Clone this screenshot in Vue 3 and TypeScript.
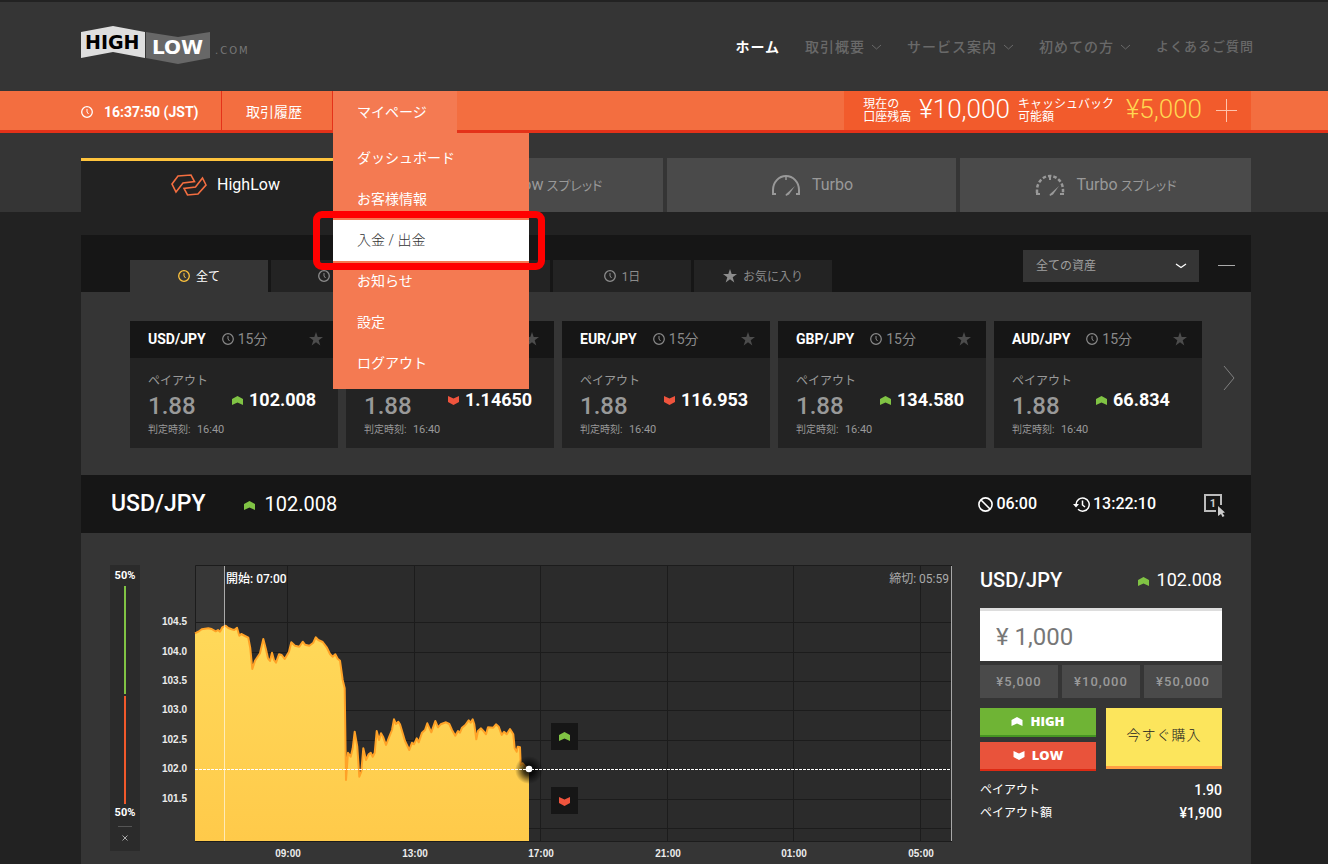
<script setup lang="ts">
import { computed, ref } from 'vue'

type Trend = 'up' | 'down'
interface Asset { pair: string; rate: string; trend: Trend }

const navLinks = [
  { label: 'ホーム', active: true, more: false },
  { label: '取引概要', active: false, more: true },
  { label: 'サービス案内', active: false, more: true },
  { label: '初めての方', active: false, more: true },
]

const menuItems = ['ダッシュボード', 'お客様情報', '入金 / 出金', 'お知らせ', '設定', 'ログアウト']
const currentItem = '入金 / 出金'

const products = [
  { name: 'HighLow', suffix: '', icon: 'wave', id: 'hl' },
  { name: 'HighLow', suffix: 'スプレッド', icon: 'wave', id: 'hls' },
  { name: 'Turbo', suffix: '', icon: 'gauge', id: 'tb' },
  { name: 'Turbo', suffix: 'スプレッド', icon: 'gauge-dashed', id: 'tbs' },
]
const activeProduct = ref('hl')

const periods = [
  { label: '全て', star: false },
  { label: '15分', star: false },
  { label: '1時間', star: false },
  { label: '1日', star: false },
  { label: 'お気に入り', star: true },
]
const activePeriod = ref('全て')

const assets: Asset[] = [
  { pair: 'USD/JPY', rate: '102.008', trend: 'up' },
  { pair: 'EUR/USD', rate: '1.14650', trend: 'down' },
  { pair: 'EUR/JPY', rate: '116.953', trend: 'down' },
  { pair: 'GBP/JPY', rate: '134.580', trend: 'up' },
  { pair: 'AUD/JPY', rate: '66.834', trend: 'up' },
]

const amount = ref('¥ 1,000')
const presets = ['¥5,000', '¥10,000', '¥50,000']

const trendPath: Record<Trend, string> = {
  up: 'M0 3L5.500 0L11 3V9L5.500 6.500L0 9Z',
  down: 'M0 0L5.500 2.500L11 0V6L5.500 9L0 6Z',
}
const starPath = 'M7 0L8.700 5H14L9.700 8.200L11.300 13.500L7 10.300L2.700 13.500L4.300 8.200L0 5H5.300Z'

const rateTicks = [
  { y: 622, label: '104.5' },
  { y: 652, label: '104.0' },
  { y: 681, label: '103.5' },
  { y: 710, label: '103.0' },
  { y: 740, label: '102.5' },
  { y: 769, label: '102.0' },
  { y: 799, label: '101.5' },
  { y: 828, label: '' },
]
const timeTicks = [
  { x: 287, label: '09:00' },
  { x: 414, label: '13:00' },
  { x: 540, label: '17:00' },
  { x: 667, label: '21:00' },
  { x: 793, label: '01:00' },
  { x: 920, label: '05:00' },
]

const series: [number, number][] = [
  [195, 633.3], [198.3, 631.7], [201.7, 629.3], [208.3, 628.3], [211.7, 629], [215.7, 631.3], [218, 630],
  [220, 631.7], [222.3, 627.3], [225.7, 625.7], [228.3, 628], [231.7, 629.3], [234.3, 630], [237, 627.7],
  [239.3, 635.7], [241.3, 634], [245, 636], [248.3, 637.7], [250.3, 648.3], [252.3, 669], [255, 660.7],
  [260, 653.3], [263.3, 639], [265.7, 648.3], [268, 658.3], [270, 661], [272, 652.7], [274, 660],
  [276, 662.7], [279, 654.3], [281.7, 655], [284.7, 659], [289, 651.7], [291.3, 642.3], [295, 645.7],
  [299.3, 646.7], [302.7, 641.7], [305, 644.7], [309.3, 645.7], [313.3, 642.7], [315.7, 637.3],
  [318.3, 640], [322.7, 642], [326.7, 647.3], [330, 654], [332.7, 656.7], [335.3, 654.3], [337.7, 658.7],
  [340, 660.7], [341.3, 670], [342.7, 680], [344.7, 688.3], [346, 780], [348, 752.7], [350.7, 756.7],
  [352.7, 748.3], [354.7, 731.7], [357.3, 746.7], [359.3, 776.7], [361.3, 771.7], [363.3, 748.3],
  [366, 760], [368.7, 754.3], [370.7, 752.7], [372.7, 756.7], [374.7, 752.7], [376.7, 731], [379, 740],
  [381, 733.3], [383.3, 737.3], [386, 745], [389.3, 736.7], [392, 730], [394, 719.3], [396, 724],
  [398.3, 721.7], [400, 724.3], [402.7, 733.3], [405, 741], [409.3, 750], [412, 742.7], [414, 744.3],
  [416.7, 738.3], [418.7, 742.3], [422, 732.7], [425, 730], [427.3, 723.3], [431.3, 732.3], [435.3, 721],
  [438, 727.3], [440.7, 724.3], [446, 722.3], [449.3, 724], [452, 730], [455.3, 735.7], [458, 731],
  [460, 732.7], [462, 727.7], [465.3, 725], [468.7, 720.3], [470.7, 722.7], [472.7, 719.3], [474.3, 724.3],
  [476.3, 739.3], [478, 731], [481, 728.3], [484, 731.7], [486, 734.3], [488, 727.3], [493.3, 727.7],
  [496, 724.3], [498.7, 726.7], [501.7, 735], [504, 731.7], [506.7, 734.3], [510, 729], [513.3, 734.3],
  [514.7, 748.3], [516.7, 751.7], [517.7, 746.7], [520, 747.3], [520.7, 765], [522.7, 763.3],
  [525.3, 766.7], [529, 769],
]
const linePoints = computed(() => series.map((p) => p.join(',')).join(' '))
const areaPoints = computed(() => `195,841 ${linePoints.value} 529,841`)
</script>

<template>
  <div class="page">
    <header class="site-header">
      <a href="#" class="logo" aria-label="HighLow.com">
        <svg width="172" height="40" viewBox="0 0 172 40">
          <path d="M0 6L32 0L64 6V32L32 26L0 32Z" fill="#dedede" />
          <path d="M65 6L97 11L129 6V32L97 38L65 32Z" fill="#676767" />
          <text x="4" y="23" font-size="19" font-weight="700" fill="#000">HIGH</text>
          <text x="71" y="28" font-size="20" font-weight="700" fill="#fff">LOW</text>
          <text x="134" y="28" font-size="10" letter-spacing="2" fill="#777">.COM</text>
        </svg>
      </a>
      <nav class="main-nav">
        <a v-for="link in navLinks" :key="link.label" href="#" :class="{ active: link.active }">
          {{ link.label }}
          <svg v-if="link.more" width="11" height="6" viewBox="0 0 11 6">
            <path d="M1 1L5.500 5L10 1" fill="none" stroke="currentColor" />
          </svg>
        </a>
        <a href="#" class="small">よくあるご質問</a>
      </nav>
    </header>

    <div class="account-bar">
      <div class="clock">
        <svg width="12" height="12" viewBox="0 0 12 12" fill="none" stroke="#fff">
          <circle cx="6" cy="6" r="5.300" stroke-width="1.300" />
          <path d="M6 3V6L7.500 8" />
        </svg>
        <span>16:37:50 (JST)</span>
      </div>
      <a href="#" class="bar-link">取引履歴</a>
      <div class="my-page">
        <button type="button" class="bar-link open" aria-expanded="true">マイページ</button>
        <ul class="menu">
          <li v-for="item in menuItems" :key="item">
            <a href="#" :class="{ current: item === currentItem }">{{ item }}</a>
          </li>
        </ul>
      </div>
      <div class="balance">
        <span class="caption">現在の<br />口座残高</span>
        <span class="money">¥10,000</span>
        <span class="caption">キャッシュバック<br />可能額</span>
        <span class="money cashback">¥5,000</span>
        <button type="button" class="icon-button" aria-label="残高を展開">
          <svg width="21" height="23" viewBox="0 0 21 23">
            <path d="M0 11.500H21M10.500 0V23" stroke="#ffc4ad" fill="none" />
          </svg>
        </button>
      </div>
    </div>

    <div class="product-strip">
      <button
        v-for="p in products"
        :key="p.id"
        type="button"
        class="product"
        :class="{ active: p.id === activeProduct }"
        @click="activeProduct = p.id"
      >
        <svg v-if="p.icon === 'wave'" class="wave" width="36" height="22" viewBox="0 0 36 22" fill="none" stroke-width="1.600">
          <path d="M1 10L7 2L20 1L23.500 7.500L12 9L5 18Z" />
          <path d="M35 11L31.500 4L24.500 13L13 14.500L16.500 21L27 20Z" />
        </svg>
        <svg v-else width="32" height="22" viewBox="0 0 32 22" fill="none" stroke="#999">
          <template v-if="p.icon === 'gauge'">
            <path d="M6 20H3V16A13 14 0 0 1 29 16V20H26" stroke-width="2" />
            <path d="M16 2V6" stroke-width="1.500" />
          </template>
          <template v-else>
            <path d="M3 19V16A13 14 0 0 1 29 16V19" stroke-width="2.500" stroke-dasharray="3.500 2" />
            <path d="M2 20H6M26 20H30" stroke-width="2" />
            <path d="M16 3V6" stroke-width="2" />
          </template>
          <path d="M25 12L19 20.500L16 22L15.500 20.500Z" fill="#999" stroke="none" />
        </svg>
        <span>{{ p.name }}<small v-if="p.suffix">{{ ' ' + p.suffix }}</small></span>
      </button>
    </div>

    <main class="content">
      <section class="market">
        <div class="market-head">
          <div class="periods">
            <button
              v-for="p in periods"
              :key="p.label"
              type="button"
              :class="{ active: p.label === activePeriod }"
              @click="activePeriod = p.label"
            >
              <svg v-if="p.star" width="14" height="14" viewBox="0 0 14 14"><path :d="starPath" fill="#8c8c8c" /></svg>
              <svg v-else class="tick" width="12" height="12" viewBox="0 0 12 12" fill="none" stroke="currentColor">
                <circle cx="6" cy="6" r="5.300" stroke-width="1.300" />
                <path d="M6 3V6L7.500 8" />
              </svg>
              <span>{{ p.label }}</span>
            </button>
          </div>
          <div class="select-wrap">
            <select aria-label="資産">
              <option>全ての資産</option>
            </select>
            <svg width="12" height="6" viewBox="0 0 12 6">
              <path d="M1 1L6 4.500L11 1" fill="none" stroke="#fff" stroke-width="1.300" />
            </svg>
          </div>
          <button type="button" class="icon-button fold" aria-label="折りたたむ">
            <svg width="17" height="3" viewBox="0 0 17 3"><path d="M0 1.500H17" stroke="#aaa" /></svg>
          </button>
        </div>

        <div class="market-body">
          <div class="cards">
            <article v-for="a in assets" :key="a.pair" class="card">
              <div class="card-head">
                <strong>{{ a.pair }}</strong>
                <svg width="12" height="12" viewBox="0 0 12 12" fill="none" stroke="#8a8a8a">
                  <circle cx="6" cy="6" r="5.300" stroke-width="1.200" />
                  <path d="M6 3V6L7.500 8" />
                </svg>
                <span>15分</span>
                <button type="button" class="icon-button star" aria-label="お気に入り">
                  <svg width="14" height="14" viewBox="0 0 14 14"><path :d="starPath" fill="#4c4c4c" /></svg>
                </button>
              </div>
              <div class="card-body">
                <div class="payout">
                  <span class="label">ペイアウト</span>
                  <span class="ratio">1.88</span>
                  <span class="judge">判定時刻: <time>16:40</time></span>
                </div>
                <div class="rate">
                  <svg :class="a.trend" width="11" height="9" viewBox="0 0 11 9"><path :d="trendPath[a.trend]" /></svg>
                  <span>{{ a.rate }}</span>
                </div>
              </div>
            </article>
          </div>
          <button type="button" class="icon-button next" aria-label="次へ">
            <svg width="12" height="26" viewBox="0 0 12 26">
              <path d="M1 1L11 13L1 25" fill="none" stroke="#808080" />
            </svg>
          </button>
        </div>
      </section>

      <section class="trade">
        <div class="trade-head">
          <h2>USD/JPY</h2>
          <svg class="up head-arrow" width="11" height="9" viewBox="0 0 11 9"><path :d="trendPath.up" /></svg>
          <span class="quote">102.008</span>
          <div class="timer">
            <svg width="15" height="15" viewBox="0 0 15 15" fill="none" stroke="#fff" stroke-width="1.600">
              <circle cx="7.500" cy="7.500" r="6.600" />
              <path d="M3 3L12 12" />
            </svg>
            <span>06:00</span>
          </div>
          <div class="timer">
            <svg width="17" height="15" viewBox="0 0 17 15" fill="none" stroke="#fff" stroke-width="1.500">
              <path d="M3 7.500A6.600 6.600 0 1 1 5 12.300" />
              <path d="M9.500 3.500V8L12 10" />
              <path d="M0 7H6L3 10.500Z" fill="#fff" stroke="none" />
            </svg>
            <span>13:22:10</span>
          </div>
          <button type="button" class="icon-button one-click" aria-label="ワンクリック注文">
            <svg width="22" height="24" viewBox="0 0 22 24">
              <path d="M12 17H1V1H17V11" fill="none" stroke="#bbb" stroke-width="2" />
              <text x="9" y="13" text-anchor="middle" font-size="11" font-weight="700" fill="#ccc">1</text>
              <path d="M14 12L21 18.500L18.500 19L20.500 22L18.500 23L17 20L14 22Z" fill="#ccc" />
            </svg>
          </button>
        </div>

        <div class="trade-body">
          <div class="sentiment">
            <span>50%</span>
            <i class="bar high"></i>
            <i class="bar low"></i>
            <span>50%</span>
            <hr />
            <button type="button" class="icon-button" aria-label="閉じる">
              <svg width="6" height="6" viewBox="0 0 6 6"><path d="M0.500 0.500L5.500 5.500M5.500 0.500L0.500 5.500" stroke="#aaa" /></svg>
            </button>
          </div>

          <svg class="chart" viewBox="159 565 793 299" role="img" aria-label="USD/JPY">
            <defs>
              <linearGradient id="fill" x1="0" y1="0" x2="0" y2="1">
                <stop offset="0" stop-color="#ffd95a" />
                <stop offset="1" stop-color="#ffca4a" />
              </linearGradient>
              <radialGradient id="halo">
                <stop offset="0" stop-color="#000" stop-opacity="0.950" />
                <stop offset="0.400" stop-color="#000" stop-opacity="0.700" />
                <stop offset="1" stop-color="#000" stop-opacity="0" />
              </radialGradient>
            </defs>
            <rect x="195" y="565" width="757" height="276" fill="#2b2b2b" />
            <rect x="195" y="565" width="29" height="276" fill="#373737" />
            <g stroke="#1c1c1c">
              <path v-for="t in rateTicks" :key="t.y" :d="`M195 ${t.y + 0.5}H952`" />
              <path v-for="t in timeTicks" :key="t.x" :d="`M${t.x + 0.5} 565V841`" />
              <path d="M952 565.500H195.500V841.500H952" fill="none" />
            </g>
            <polygon :points="areaPoints" fill="url(#fill)" />
            <polyline :points="linePoints" fill="none" stroke="#ffa227" stroke-width="2" stroke-linejoin="round" />
            <path d="M224.500 566V841" stroke="#fff" stroke-opacity="0.600" />
            <path d="M951.500 566V841" stroke="#a8a8a8" />
            <circle cx="529" cy="770" r="14" fill="url(#halo)" />
            <path d="M195 769.500H951" stroke="#fff" stroke-dasharray="3 1" />
            <circle cx="529" cy="769" r="3.300" fill="#fff" />
            <g class="axis">
              <text v-for="t in rateTicks" :key="t.y" x="187" :y="t.y + 3" text-anchor="end">{{ t.label }}</text>
              <text v-for="t in timeTicks" :key="t.x" :x="t.x + 1" y="857" text-anchor="middle">{{ t.label }}</text>
            </g>
            <text class="mark" x="226" y="583" font-weight="500" fill="#fff">開始: 07:00</text>
            <text class="mark" x="949" y="583" text-anchor="end" fill="#aaa">締切: 05:59</text>
            <rect x="551" y="723" width="27" height="27" fill="#161616" />
            <rect x="551" y="787" width="27" height="27" fill="#161616" />
            <path class="up" transform="translate(559 732)" :d="trendPath.up" />
            <path class="down" transform="translate(559 797)" :d="trendPath.down" />
          </svg>

          <form class="order" @submit.prevent>
            <div class="order-title">
              <strong>USD/JPY</strong>
              <svg class="up" width="11" height="9" viewBox="0 0 11 9"><path :d="trendPath.up" /></svg>
              <span>102.008</span>
            </div>
            <input v-model="amount" class="amount" type="text" aria-label="金額" />
            <div class="presets">
              <button v-for="p in presets" :key="p" type="button" @click="amount = p.replace('¥', '¥ ')">{{ p }}</button>
            </div>
            <div class="actions">
              <div class="directions">
                <button type="button" class="high">
                  <svg width="12" height="9" viewBox="0 0 11 9"><path :d="trendPath.up" fill="#fff" /></svg>HIGH
                </button>
                <button type="button" class="low">
                  <svg width="12" height="9" viewBox="0 0 11 9"><path :d="trendPath.down" fill="#fff" /></svg>LOW
                </button>
              </div>
              <button type="submit" class="buy">今すぐ購入</button>
            </div>
            <dl class="summary">
              <div><dt>ペイアウト</dt><dd>1.90</dd></div>
              <div><dt>ペイアウト額</dt><dd>¥1,900</dd></div>
            </dl>
          </form>
        </div>
      </section>
    </main>
  </div>
</template>

<style>
body {
  background: #222;
}
</style>

<style scoped>
.page {
  min-width: 1200px;
  border-top: 2px solid #222;
  background: #222;
  color: #fff;
  font: 14px/20px Roboto, "Noto Sans CJK JP", sans-serif;
}
.page *,
.page *::after {
  box-sizing: border-box;
}
button,
select,
input {
  font: inherit;
  color: inherit;
  border: 0;
  border-radius: 0;
  padding: 0;
  margin: 0;
  background: none;
}
button {
  cursor: pointer;
}
a {
  color: inherit;
  text-decoration: none;
}
svg {
  display: block;
  flex: none;
}
.icon-button {
  display: flex;
  align-items: center;
  justify-content: center;
}
.up {
  fill: #80c344;
}
.down {
  fill: #ef543d;
}

.site-header {
  display: flex;
  align-items: center;
  justify-content: space-between;
  height: 89px;
  padding: 0 74px 0 81px;
  background: #353535;
}
.logo {
  padding-bottom: 2px;
}
.logo text {
  font-family: "DejaVu Sans", sans-serif;
}
.main-nav {
  display: flex;
  align-items: center;
  gap: 25px;
  color: #696969;
  font-weight: 500;
  letter-spacing: 1px;
}
.main-nav a {
  display: flex;
  align-items: center;
  gap: 6px;
}
.main-nav .active {
  color: #fff;
  font-weight: 700;
}
.main-nav .small {
  font-size: 13px;
}

.account-bar {
  position: relative;
  z-index: 2;
  display: flex;
  height: 42px;
  padding: 0 77px 0 81px;
  border-bottom: 3px solid #e43219;
  background: #f36e40;
}
.clock {
  display: flex;
  align-items: center;
  gap: 11px;
  width: 141px;
  padding-top: 3px;
  border-right: 1px solid #e43219;
  font-weight: 700;
}
.bar-link {
  display: flex;
  align-items: center;
  padding: 3px 30px 0 24px;
  border-right: 1px solid #e43219;
}
.my-page {
  position: relative;
  height: 42px;
}
.bar-link.open {
  height: 42px;
  padding: 0 30px 0 24px;
  border: 0;
  background: #f47a52;
}
.menu {
  position: absolute;
  top: 42px;
  left: 0;
  width: 196px;
  margin: 0;
  padding: 5px 0;
  list-style: none;
  background: #f47a52;
}
.menu a {
  position: relative;
  display: block;
  padding: 0 24px;
  line-height: 41px;
}
.menu .current {
  background: #fff;
  color: #333;
  font-weight: 300;
}
.menu .current::after {
  content: "";
  position: absolute;
  inset: -9px -16px -9px -20px;
  border: 7px solid #f00;
  border-radius: 9px;
}
.balance {
  display: flex;
  align-items: center;
  gap: 8px;
  margin-left: auto;
  padding: 0 14px 0 19px;
  background: #f25b2c;
}
.caption {
  font-size: 12px;
  line-height: 13px;
}
.money {
  padding-bottom: 3px;
  font-size: 26px;
  font-weight: 300;
}
.cashback {
  margin: 0 6px 0 4px;
  color: #ffd651;
}

.product-strip {
  display: grid;
  grid-template-columns: 1fr 1fr 1fr 291px;
  gap: 4px;
  padding: 25px 77px 0 81px;
  background: #353535;
}
.product {
  display: flex;
  align-items: center;
  justify-content: center;
  gap: 10px;
  height: 54px;
  background: #4a4a4a;
  color: #999;
  font-size: 16px;
}
.product small {
  font-size: 13px;
  font-feature-settings: "palt";
}
.product.active {
  padding-bottom: 3px;
  border-top: 3px solid #ffc43d;
  background: #222;
  color: #fff;
}
.wave {
  stroke: #999;
}
.active .wave {
  stroke: #f36e40;
}

.content {
  padding: 23px 77px 0 81px;
}
.market-head {
  display: flex;
  align-items: center;
  height: 57px;
  padding: 4px 16px 0 49px;
  background: #161616;
}
.periods {
  display: flex;
  align-self: flex-end;
  gap: 3px;
  margin-right: auto;
}
.periods button {
  display: flex;
  align-items: center;
  justify-content: center;
  gap: 6px;
  width: 138px;
  height: 32px;
  background: #232323;
  color: #8c8c8c;
  font-size: 12px;
}
.periods span {
  padding-top: 2px;
}
.periods .active {
  background: #353535;
  color: #fff;
}
.periods .active .tick {
  color: #ffc43d;
}
.select-wrap {
  position: relative;
  margin-right: 19px;
}
.select-wrap select {
  display: block;
  width: 176px;
  height: 32px;
  padding: 0 13px;
  appearance: none;
  background: #353535;
  color: #a0a0a0;
  font-size: 12px;
}
.select-wrap svg {
  position: absolute;
  top: 13px;
  right: 12px;
}
.market-body {
  display: flex;
  padding: 29px 0 27px 49px;
  background: #353535;
}
.cards {
  display: flex;
  flex: 1;
  gap: 8px;
}
.card {
  flex: 1;
  background: #232323;
}
.card-head {
  display: flex;
  align-items: center;
  height: 37px;
  padding: 0 15px 2px 18px;
  background: #161616;
  color: #8a8a8a;
}
.card-head strong {
  margin-right: 16px;
  color: #fff;
}
.card-head span {
  margin-left: 4px;
}
.star {
  margin-left: auto;
}
.card-body {
  display: flex;
  height: 90px;
  padding: 13px 18px 0;
}
.payout {
  display: flex;
  flex-direction: column;
  width: 84px;
  color: #999;
}
.label {
  font-size: 12px;
}
.ratio {
  font-size: 24px;
  line-height: 30px;
  font-weight: 500;
}
.judge {
  font-size: 10px;
  line-height: 18px;
  white-space: nowrap;
}
.judge time {
  margin-left: 4px;
  font-size: 11px;
}
.rate {
  display: flex;
  align-items: center;
  align-self: flex-start;
  gap: 6px;
  padding-top: 19px;
  font-size: 18px;
  font-weight: 700;
}
.next {
  width: 49px;
  padding: 0 0 14px 5px;
}

.trade-head {
  display: flex;
  align-items: center;
  height: 58px;
  padding: 0 25px 0 30px;
  background: #161616;
}
.trade-head h2 {
  margin: 0 39px 0 0;
  font-size: 23px;
  font-weight: 500;
}
.head-arrow {
  margin-top: 3px;
}
.quote {
  margin: 0 auto 0 9px;
  font-size: 20px;
}
.timer {
  display: flex;
  align-items: center;
  gap: 3px;
  margin-right: 36px;
  font-size: 16px;
  font-weight: 500;
}
.one-click {
  margin-left: 12px;
  padding-top: 3px;
}
.trade-body {
  display: flex;
  align-items: flex-start;
  padding: 32px 29px 0;
  background: #353535;
}
.sentiment {
  display: flex;
  flex-direction: column;
  align-items: center;
  width: 30px;
  padding: 3px 0 5px;
  background: #2b2b2b;
  font-size: 11px;
  line-height: 16px;
  font-weight: 700;
}
.bar {
  width: 2px;
  height: 108px;
}
.bar.high {
  margin: 2px 0;
  background: #80c344;
}
.bar.low {
  margin-bottom: 1px;
  background: #f1592b;
}
.sentiment hr {
  width: 14px;
  margin: 5px 0 3px;
  border: 0;
  border-top: 1px solid #555;
}
.sentiment button {
  width: 16px;
  height: 16px;
}
.chart {
  flex: 1;
  min-width: 0;
  margin: 0 28px 0 19px;
}
.axis {
  font: 700 10px "Liberation Sans", sans-serif;
  fill: #ececec;
}
.mark {
  font-size: 12px;
}
.order {
  width: 242px;
}
.order-title {
  display: flex;
  align-items: center;
  gap: 8px;
  height: 30px;
  margin-bottom: 13px;
  font-size: 18px;
}
.order-title svg {
  margin-top: 3px;
}
.order-title strong {
  margin-right: auto;
  font-size: 20px;
  font-weight: 500;
}
.amount {
  display: block;
  width: 100%;
  height: 53px;
  padding: 2px 16px 0;
  border-top: 3px solid #ddd;
  background: #fff;
  color: #777;
  font-size: 24px;
}
.presets {
  display: grid;
  grid-template-columns: repeat(3, 1fr);
  gap: 4px;
  margin: 4px 0 10px;
}
.presets button {
  height: 33px;
  background: #4a4a4a;
  color: #999;
  font-size: 13px;
  font-weight: 500;
  letter-spacing: 1px;
}
.actions {
  display: flex;
  align-items: flex-start;
  gap: 10px;
}
.directions {
  display: flex;
  flex: 1;
  flex-direction: column;
  gap: 5px;
}
.directions button {
  display: flex;
  align-items: center;
  justify-content: center;
  gap: 7px;
  height: 29px;
  padding-bottom: 1px;
  font: 800 13px/20px "Open Sans", sans-serif;
}
.directions .high {
  border-bottom: 2px solid #459422;
  background: #6fb435;
}
.directions .low {
  border-bottom: 2px solid #dd2a14;
  background: #e9533b;
}
.buy {
  flex: 1;
  height: 61px;
  padding-bottom: 4px;
  border-bottom: 3px solid #ff9f43;
  background: #fce55c;
  color: #222;
  font-weight: 300;
  letter-spacing: 1px;
}
.summary {
  margin: 8px 0 0;
  line-height: 23px;
}
.summary div {
  display: flex;
  justify-content: space-between;
}
.summary dt {
  font-size: 12px;
}
.summary dd {
  margin: 0;
  font-weight: 500;
}
</style>
